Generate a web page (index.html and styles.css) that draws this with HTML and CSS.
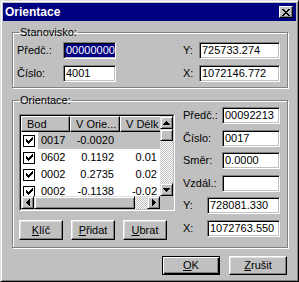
FILE: index.html
```html
<!DOCTYPE html>
<html lang="cs">
<head>
<meta charset="utf-8">
<title>Orientace</title>
<link rel="stylesheet" href="styles.css">
</head>
<body>
<div class="window">
  <div class="titlebar">
    <span class="title">Orientace</span>
    <span class="close"><svg width="8" height="7" viewBox="0 0 8 7" shape-rendering="crispEdges"><path d="M0 0h2v1H0zM6 0h2v1H6zM1 1h2v1H1zM5 1h2v1H5zM2 2h4v1H2zM3 3h2v1H3zM2 4h4v1H2zM1 5h2v1H1zM5 5h2v1H5zM0 6h2v1H0zM6 6h2v1H6z" fill="#000"/></svg></span>
  </div>

  <fieldset class="group">
    <legend>Stanovisko:</legend>
    <div class="station-grid">
      <span class="lbl">Předč.:</span>
      <div class="field"><span class="sel">00000000</span></div>
      <span></span>
      <span class="lbl">Y:</span>
      <div class="field">725733.274</div>

      <span class="lbl">Číslo:</span>
      <div class="field">4001</div>
      <span></span>
      <span class="lbl">X:</span>
      <div class="field">1072146.772</div>
    </div>
  </fieldset>

  <fieldset class="group group-orient">
    <legend>Orientace:</legend>
    <div class="orient-body">
      <div class="orient-left">
        <div class="listview">
          <div class="lv-grid">
            <div class="lv-view">
              <div class="lv-header">
                <div class="hcell c1">Bod</div>
                <div class="hcell c2">V Orie...</div>
                <div class="hcell c3">V Délk</div>
              </div>
              <div class="lv-row selected">
                <div class="cell c1"><span class="chk"><svg width="7" height="7" viewBox="0 0 7 7" shape-rendering="crispEdges"><path d="M6 0h1v1H6zM5 1h2v1H5zM0 2h1v1H0zM4 2h3v1H4zM0 3h2v1H0zM3 3h3v1H3zM0 4h5v1H0zM1 5h3v1H1zM2 6h1v1H2z" fill="#000"/></svg></span><span class="txt">0017</span></div>
                <div class="cell c2">-0.0020</div>
                <div class="cell c3"></div>
              </div>
              <div class="lv-row">
                <div class="cell c1"><span class="chk"><svg width="7" height="7" viewBox="0 0 7 7" shape-rendering="crispEdges"><path d="M6 0h1v1H6zM5 1h2v1H5zM0 2h1v1H0zM4 2h3v1H4zM0 3h2v1H0zM3 3h3v1H3zM0 4h5v1H0zM1 5h3v1H1zM2 6h1v1H2z" fill="#000"/></svg></span><span class="txt">0602</span></div>
                <div class="cell c2">0.1192</div>
                <div class="cell c3">0.01</div>
              </div>
              <div class="lv-row">
                <div class="cell c1"><span class="chk"><svg width="7" height="7" viewBox="0 0 7 7" shape-rendering="crispEdges"><path d="M6 0h1v1H6zM5 1h2v1H5zM0 2h1v1H0zM4 2h3v1H4zM0 3h2v1H0zM3 3h3v1H3zM0 4h5v1H0zM1 5h3v1H1zM2 6h1v1H2z" fill="#000"/></svg></span><span class="txt">0002</span></div>
                <div class="cell c2">0.2735</div>
                <div class="cell c3">0.02</div>
              </div>
              <div class="lv-row">
                <div class="cell c1"><span class="chk"><svg width="7" height="7" viewBox="0 0 7 7" shape-rendering="crispEdges"><path d="M6 0h1v1H6zM5 1h2v1H5zM0 2h1v1H0zM4 2h3v1H4zM0 3h2v1H0zM3 3h3v1H3zM0 4h5v1H0zM1 5h3v1H1zM2 6h1v1H2z" fill="#000"/></svg></span><span class="txt">0002</span></div>
                <div class="cell c2">-0.1138</div>
                <div class="cell c3">-0.02</div>
              </div>
            </div>
            <div class="vscroll">
              <div class="sbtn"><svg width="7" height="4" viewBox="0 0 7 4" shape-rendering="crispEdges"><path d="M3 0h1v1h1v1h1v1h1v1H0V3h1V2h1V1h1z" fill="#000"/></svg></div>
              <div class="thumb vthumb"></div>
              <div class="track"></div>
              <div class="sbtn"><svg width="7" height="4" viewBox="0 0 7 4" shape-rendering="crispEdges"><path d="M0 0h7v1H6v1H5v1H4v1H3V3H2V2H1V1H0z" fill="#000"/></svg></div>
            </div>
            <div class="hscroll">
              <div class="sbtn"><svg width="4" height="7" viewBox="0 0 4 7" shape-rendering="crispEdges"><path d="M3 0h1v7H3V6H2V5H1V4H0V3h1V2h1V1h1z" fill="#000"/></svg></div>
              <div class="thumb hthumb"></div>
              <div class="track"></div>
              <div class="sbtn"><svg width="4" height="7" viewBox="0 0 4 7" shape-rendering="crispEdges"><path d="M0 0h1v1h1v1h1v1h1v1H3v1H2v1H1v1H0z" fill="#000"/></svg></div>
            </div>
            <div class="corner"></div>
          </div>
        </div>
        <div class="btn-row">
          <button class="btn small"><u>K</u>líč</button>
          <button class="btn small"><u>P</u>řidat</button>
          <button class="btn small"><u>U</u>brat</button>
        </div>
      </div>
      <div class="orient-right">
        <div class="frow"><span class="lbl">Předč.:</span><div class="field">00092213</div></div>
        <div class="frow"><span class="lbl">Číslo:</span><div class="field">0017</div></div>
        <div class="frow"><span class="lbl">Směr:</span><div class="field">0.0000</div></div>
        <div class="frow"><span class="lbl">Vzdál.:</span><div class="field"></div></div>
        <div class="frow wide"><span class="lbl">Y:</span><div class="field">728081.330</div></div>
        <div class="frow wide"><span class="lbl">X:</span><div class="field">1072763.550</div></div>
      </div>
    </div>
  </fieldset>

  <div class="footer">
    <button class="btn dlg default"><u>O</u>K</button>
    <button class="btn dlg"><u>Z</u>rušit</button>
  </div>
</div>
</body>
</html>
```
FILE: styles.css
```css
* { box-sizing: border-box; }
html, body { margin: 0; padding: 0; }
body {
  background: #c0c0c0;
  font-family: "Liberation Sans", Arial, sans-serif;
  font-size: 11px;
  line-height: 13px;
  color: #000;
}
.window {
  width: 299px;
  height: 282px;
  background: #c0c0c0;
  border: 1px solid;
  border-color: #dfdfdf #000 #000 #dfdfdf;
  box-shadow: inset 1px 1px #fff, inset -1px -1px #808080;
  padding: 2px;
  display: flex;
  flex-direction: column;
}
.titlebar {
  height: 18px;
  flex: none;
  background: #000080;
  color: #fff;
  display: flex;
  align-items: center;
  justify-content: space-between;
  padding: 0 3px 0 2px;
}
.title { font-weight: bold; font-size: 12px; line-height: 14px; }
.close {
  width: 14px;
  height: 12px;
  background: #c0c0c0;
  border: 1px solid;
  border-color: #fff #000 #000 #fff;
  box-shadow: inset -1px -1px #808080;
  display: flex;
  align-items: center;
  justify-content: center;
}
.close svg { display: block; }

.group {
  margin: 5px 8px 0 9px;
  padding: 0;
  border: 1px solid #808080;
  box-shadow: inset 1px 1px #fff, 1px 1px #fff;
  min-width: 0;
}
.group-orient { margin-top: 6px; }
.group legend {
  margin-left: 6px;
  padding: 0 1px;
  line-height: 13px;
  font-size: 11px;
}

.station-grid {
  display: grid;
  grid-template-columns: 46px 53px 1fr 16px 81px;
  grid-auto-rows: 17px;
  row-gap: 6px;
  align-items: center;
  padding: 3px 7px 5px 4px;
}

.field {
  height: 17px;
  background: #fff;
  border: 1px solid;
  border-color: #808080 #fff #fff #808080;
  box-shadow: inset 1px 1px #000, inset -1px -1px #c0c0c0;
  padding: 1px 0 0 2px;
  white-space: nowrap;
  overflow: hidden;
  line-height: 13px;
}
.sel {
  display: inline-block;
  background: #000080;
  color: #fff;
  margin-left: -1px;
  padding: 0 1px;
  line-height: 13px;
}

.orient-body {
  display: flex;
  gap: 8px;
  padding: 0 7px 7px 6px;
}
.orient-left { width: 156px; flex: none; padding-top: 7px; }
.listview {
  height: 97px;
  border: 1px solid;
  border-color: #808080 #fff #fff #808080;
}
.lv-grid {
  height: 100%;
  border: 1px solid;
  border-color: #000 #c0c0c0 #c0c0c0 #000;
  display: grid;
  grid-template-columns: 139px 13px;
  grid-template-rows: 80px 13px;
}
.lv-view {
  background: #fff;
  overflow: hidden;
  display: flex;
  flex-direction: column;
}
.lv-header { display: flex; height: 16px; flex: none; }
.hcell {
  flex: none;
  height: 16px;
  background: #c0c0c0;
  border: 1px solid;
  border-color: #fff #000 #000 #fff;
  box-shadow: inset -1px -1px #808080;
  padding-left: 5px;
  line-height: 14px;
  white-space: nowrap;
  overflow: hidden;
}
.c1 { width: 49px; }
.c2 { width: 50px; }
.c3 { width: 43px; }
.hcell.c3 { width: 50px; }
.lv-row { display: flex; height: 17px; flex: none; }
.cell {
  flex: none;
  height: 17px;
  line-height: 17px;
  white-space: nowrap;
}
.cell.c1 { display: flex; align-items: center; }
.cell.c2, .cell.c3 { text-align: right; padding-right: 6px; }
.chk {
  width: 12px;
  height: 12px;
  margin: 0 3px 0 2px;
  border: 1px solid #000;
  background: #fff;
  display: flex;
  align-items: center;
  justify-content: center;
  flex: none;
}
.chk svg { display: block; }
.txt { flex: 1; height: 17px; padding-left: 3px; }
.selected .txt, .selected .c2, .selected .c3 { background: #c0c0c0; }

.vscroll { display: flex; flex-direction: column; }
.hscroll { display: flex; }
.sbtn, .thumb {
  flex: none;
  width: 13px;
  height: 13px;
  background: #c0c0c0;
  border: 1px solid;
  border-color: #dfdfdf #000 #000 #dfdfdf;
  box-shadow: inset 1px 1px #fff, inset -1px -1px #808080;
  display: flex;
  align-items: center;
  justify-content: center;
}
.sbtn svg { display: block; }
.vthumb { height: 12px; }
.hthumb { width: 101px; }
.track {
  flex: 1;
  background: repeating-conic-gradient(#c0c0c0 0 25%, #fff 0 50%) 0 0 / 2px 2px;
}
.corner { background: #c0c0c0; }

.btn-row { display: flex; gap: 8px; margin-top: 9px; }
.btn {
  font: inherit;
  color: #000;
  background: #c0c0c0;
  border: 1px solid;
  border-color: #fff #000 #000 #fff;
  box-shadow: inset -1px -1px #808080, inset 1px 1px #dfdfdf;
  padding: 0;
  margin: 0;
  display: flex;
  align-items: center;
  justify-content: center;
  line-height: 13px;
}
.btn.small { width: 44px; height: 20px; }
.btn u { text-decoration-thickness: 1px; }

.orient-right {
  flex: 1;
  display: flex;
  flex-direction: column;
  gap: 5.6px;
}
.frow {
  display: flex;
  justify-content: space-between;
  align-items: center;
  height: 17px;
}
.frow .field { width: 58px; }
.frow.wide .field { width: 73px; }

.footer {
  display: flex;
  justify-content: flex-end;
  gap: 9px;
  margin-top: 8px;
  padding-right: 9px;
}
.btn.dlg { width: 58px; height: 19px; }
.btn.default {
  border: 1px solid #000;
  box-shadow: inset 1px 1px #fff, inset -1px -1px #000, inset -2px -2px #808080;
}
```
